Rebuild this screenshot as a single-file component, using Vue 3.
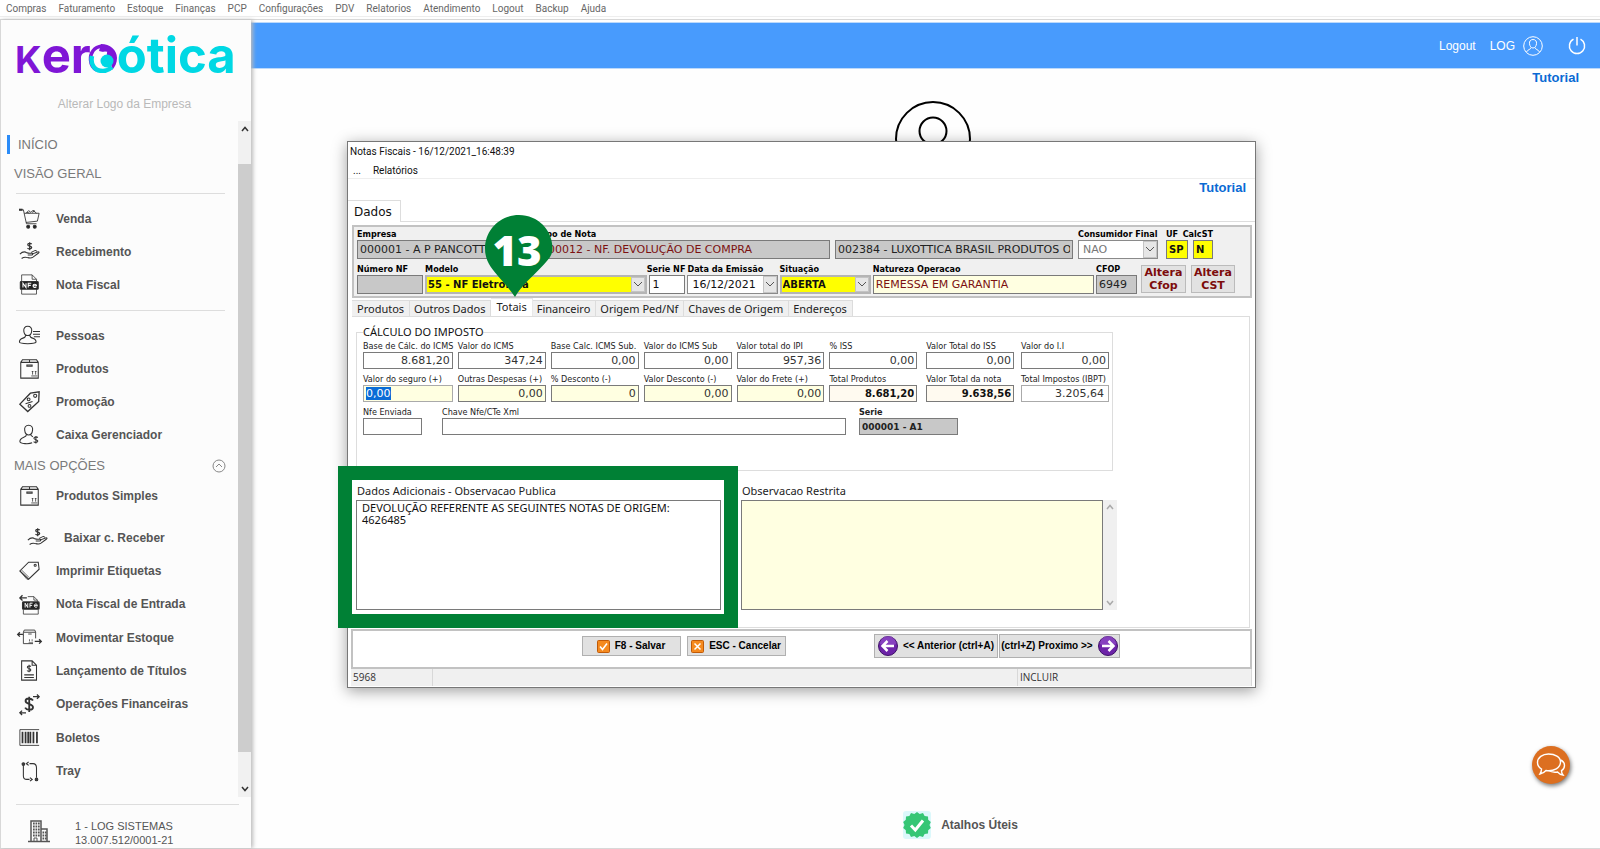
<script setup>
import { onMounted, ref } from 'vue'

const menus = ['Compras', 'Faturamento', 'Estoque', 'Finanças', 'PCP', 'Configurações', 'PDV', 'Relatorios', 'Atendimento', 'Logout', 'Backup', 'Ajuda']

const box = '<path d="M2 5h20v18H2zM2 5l2-3h16l2 3M12 2v3M9 8h6v1.500H9z"/><path d="M15.500 15v4M19 15v4M14 20.500h7M14.500 16l1-1 1 1M18 16l1-1 1 1" stroke-width=".9"/>'
const hand = '<path d="M1 15c3-3 6-3 8-1.500 2 1 4 .5 6 .5 1.500 0 1 2-.5 2H10M15 15l6-2.500c2-.6 2.500.5 1 1.500l-6 4.500c-1.500 1-4 1-6 .5-3-1-5-.5-7 1M14 13l4-2c1.500-.5 2 .2 1.500.8"/><path d="M14.500 3.500c-1-1.200-4.500-1-4.500.8 0 2 4.500 1.200 4.500 3.200 0 1.800-3.500 2-4.800.7M12.200 1.500v9" stroke-width="1.400"/>'
const icons = {
  cart: '<path d="M1 2h4l3.500 16h11.500M6 6h17l-2 9-13 1.500" stroke-width="1"/><path d="M8 6l3-3 2.500 2L16 2.500 20 6M9 5l3 1M15 5l3-2" stroke-width="1"/><circle cx="10.500" cy="21.500" r="1.700" fill="#222"/><circle cx="18" cy="21.500" r="1.700" fill="#222"/><path d="M0 2h4" stroke-width="2.400"/>',
  hand,
  nfe: '<path d="M3 9V1h12l5 5v3M15 1v5h5M3 17v6h17v-6" stroke-width=".9"/><rect x="1.500" y="8.500" width="20.500" height="9" rx="1" fill="#222"/><path d="M4.500 15.500v-5l3.500 5v-5M10.500 15.500v-5h3.500M10.500 13h3M16 13.500h4c0-2.500-4-2.500-4 0 0 2.300 3 2.300 3.800 1.300" stroke="#fff" stroke-width="1.200"/>',
  person: '<path d="M10 1.500c-3 0-5 2-4.500 5.500.3 3 2 5 4.500 5s4.200-2 4.500-5c.5-3.500-1.500-5.500-4.500-5.500zM7.500 12c0 2-1 2.500-3 3-2.500.8-4 2.200-4 4.500 0 2.500 19 2.500 19 0 0-2.300-1.500-3.700-4-4.500-2-.5-3-1-3-3"/><path d="M16 7.500h8M16 10.500h8M17 13.500h7"/>',
  box,
  tag: '<path d="M13 2.500 23 1l-.500 11L10 23.500 1 15z" stroke-width="1.500"/><circle cx="18.500" cy="5.500" r="1.800"/><circle cx="11" cy="9.500" r="1.600"/><circle cx="12" cy="17" r="1.600"/><path d="M7.500 14.500l8-2.500"/>',
  cashier: '<path d="M11 1.500c-3.500 0-5 2.500-4.500 5.500.3 3 2 5.500 4.500 5.500S15.200 10 15.500 7c.5-3-1-5.500-4.500-5.500zM8.500 12c0 2-1 2.500-3 3.200C3 16.200 1 17.500 1 20c0 3 11 3 14 1.500M13.500 12c0 1.500 1 2 2.500 2.500"/><path d="M21.500 15.500c-1-1.300-4.500-1-4.500.8 0 2 4.500 1.200 4.500 3.200 0 1.900-3.600 2-4.800.7M19.300 13.800v8.600" stroke-width="1.200"/>',
  label: '<path d="M11 2.500h11l1 8L11 22 1 12.500z"/><path d="M1 12.500l8 9.500h2M3 11.500l8.500 8.500" stroke-width=".8"/><circle cx="18.500" cy="6" r="1.200"/>',
  nfein: '<path d="M10 3h7l4 4v2M17 3v4h4M5 18v5h17v-5" stroke-width=".9"/><rect x="4" y="9" width="19" height="8.500" rx="1" fill="#222"/><path d="M7 15.500v-5l3 5v-5M12.500 15.500v-5h3M12.500 13h2.500M17.500 13.300h3.500c0-2.500-3.500-2.500-3.500 0 0 2.200 2.600 2.200 3.400 1.200" stroke="#fff" stroke-width="1.100"/><path d="M1 4.500h8M4 1.500l-3 3 3 3" stroke-width="1.500"/>',
  move: '<path d="M5 9.500V6h14v7M5 9v10h11M5 6l1-2.500h12L19 6M10.500 8h4" stroke-width="1"/><path d="M12 14v2.500M15 14v2.500M11 18h5" stroke-width=".8"/><path d="M4.500 8.500H-1M1 6l-2.500 2.500L1 11M18 16.500h7M23 14l2.500 2.500L23 19" stroke-width="1.500"/>',
  doc: '<path d="M3 1h12l5 5v17H3zM15 1v5h5M6 17h11M6 20h11"/><path d="M13.500 7.500c-1-1.300-4-1-4 .8s4 1.200 4 3-3.300 2-4.300.7M11.500 5.500v8.500" stroke-width="1.200"/>',
  money: '<path d="M16 7.500C14 4 7.500 4.500 7.500 8c0 4 8.500 3 8.500 7 0 3.500-7 4.200-9 .5M11.700 3v17.500" stroke-width="2.100"/><path d="M16 3h7M20.500.5 23 3l-2.500 2.500M8 21.500H1M3.500 19 1 21.500 3.500 24" stroke-width="1.500"/>',
  barcode: '<path d="M1 3h22M1 21h22M1 3v18" stroke-width="1"/><path d="M4 5.500v13M7.500 5.500v13M10.500 5.500v13M13 5.500v13M16.500 5.500v13M20.500 5.500v13" stroke-width="2"/>',
  tray: '<path d="M5 5v12c0 3 2 4 4 4h3M20 19V8c0-3-1-5-4-5h-4"/><circle cx="5" cy="3.500" r="1.500" fill="#444"/><circle cx="20" cy="21" r="1.500" fill="#444"/><path d="M11 1 8.500 3 11 5M12.500 19l2.500 2-2.500 2" stroke-width="1.400"/>',
}
const groupA = [['cart', 'Venda'], ['hand', 'Recebimento'], ['nfe', 'Nota Fiscal']]
const groupB = [['person', 'Pessoas'], ['box', 'Produtos'], ['tag', 'Promoção'], ['cashier', 'Caixa Gerenciador']]
const groupC = [['label', 'Imprimir Etiquetas'], ['nfein', 'Nota Fiscal de Entrada'], ['move', 'Movimentar Estoque'], ['doc', 'Lançamento de Títulos'], ['money', 'Operações Financeiras'], ['barcode', 'Boletos'], ['tray', 'Tray']]

const tabs = ['Produtos', 'Outros Dados', 'Totais', 'Financeiro', 'Origem Ped/Nf', 'Chaves de Origem', 'Endereços']
const activeTab = ref('Totais')

const taxes = [
  ['Base de Cálc. do ICMS', '8.681,20', ''],
  ['Valor do ICMS', '347,24', ''],
  ['Base Calc. ICMS Sub.', '0,00', ''],
  ['Valor do ICMS Sub', '0,00', ''],
  ['Valor total do IPI', '957,36', ''],
  ['% ISS', '0,00', 'after-lg'],
  ['Valor Total do ISS', '0,00', 'after-sm'],
  ['Valor do I.I', '0,00', ''],
  ['Valor do seguro (+)', '0,00', 'cream editing'],
  ['Outras Despesas (+)', '0,00', 'cream'],
  ['% Desconto (-)', '0', 'cream'],
  ['Valor Desconto (-)', '0,00', 'cream'],
  ['Valor do Frete (+)', '0,00', 'cream'],
  ['Total Produtos', '8.681,20', 'ivory after-lg'],
  ['Valor Total da nota', '9.638,56', 'ivory after-sm'],
  ['Total Impostos (IBPT)', '3.205,64', 'soft'],
]
const publicNote = ref('DEVOLUÇÃO REFERENTE AS SEGUINTES NOTAS DE ORIGEM:\n4626485')

const taxGrid = ref(null)
onMounted(() => {
  const field = taxGrid.value.querySelector('.editing input')
  field.focus({ preventScroll: true })
  field.select()
})
</script>

<template>
  <div class="page">
    <nav class="menubar">
      <button v-for="m in menus" :key="m" type="button">{{ m }}</button>
    </nav>

    <div class="body">
      <aside class="sidebar">
        <div class="logo" aria-label="keroótica">
          <span class="k">K</span><span class="purple">er</span>
          <svg class="eye" viewBox="0 0 30 30">
            <path d="M14 3C6 4 2 10 2.500 17c.3 4 2 8 6 10" fill="none" stroke="#7f16d6" stroke-width="3.500" />
            <path d="M13 1c9 0 16 6 16 14 0 5-2 9-5 12-1-8-1-17-13-19z" fill="#7f16d6" />
            <path d="M4 13c-2 9 3 15 11 15 4 0 7-2 9-4" fill="none" stroke="#00d8e4" stroke-width="4.500" />
            <circle cx="19" cy="18" r="6.500" fill="#00d8e4" />
            <path d="M10 19c-1-6 3-10 9-9" fill="none" stroke="#fff" stroke-width="2.500" />
          </svg>
          <span class="cyan">ótica</span>
        </div>
        <a class="change-logo" href="#">Alterar Logo da Empresa</a>
        <div class="nav-wrap">
          <nav class="nav">
            <a class="home" href="#">INÍCIO</a>
            <h2>VISÃO GERAL</h2>
            <hr />
            <a v-for="[icon, name] in groupA" :key="name" class="item" href="#">
              <svg class="ico" viewBox="0 0 24 24" v-html="icons[icon]"></svg>{{ name }}
            </a>
            <hr class="second" />
            <a v-for="[icon, name] in groupB" :key="name" class="item" href="#">
              <svg class="ico" viewBox="0 0 24 24" v-html="icons[icon]"></svg>{{ name }}
            </a>
            <h2 class="more">MAIS OPÇÕES
              <svg width="14" height="14" viewBox="0 0 14 14" fill="none" stroke="#888"><circle cx="7" cy="7" r="6" /><path d="M4 8l3-3 3 3" /></svg>
            </h2>
            <a class="item" href="#"><svg class="ico" viewBox="0 0 24 24" v-html="icons.box"></svg>Produtos Simples</a>
            <a class="item nested" href="#"><svg class="ico" viewBox="0 0 24 24" v-html="icons.hand"></svg>Baixar c. Receber</a>
            <div class="long">
              <a v-for="[icon, name] in groupC" :key="name" class="item" href="#">
                <svg class="ico" viewBox="0 0 24 24" v-html="icons[icon]"></svg>{{ name }}
              </a>
            </div>
          </nav>
          <div class="scroll">
            <svg width="8" height="6" viewBox="0 0 8 6"><path d="M1 5l3-3.500L7 5" /></svg>
            <i></i>
            <svg width="8" height="6" viewBox="0 0 8 6"><path d="M1 1l3 3.500L7 1" /></svg>
          </div>
        </div>
        <footer class="company">
          <svg width="22" height="24" viewBox="0 0 22 24" fill="none" stroke="#555">
            <path d="M3 22V2h10v8h6v12M0 22.500h22M13 10v12" stroke-width="1.500" />
            <path d="M5 4.500h7M5 7.500h7M5 10.500h7M5 13.500h7M5 16.500h7M14.500 13.500h4M14.500 16.500h4M14.500 19.500h4" stroke-width="2.200" stroke-dasharray="1.700 .8" />
            <path d="M6 22v-3h3v3" />
          </svg>
          <div>1 - LOG SISTEMAS<br />13.007.512/0001-21</div>
        </footer>
      </aside>

      <main class="main">
        <header class="topbar">
          <a href="#">Logout</a>
          <a href="#" class="user">LOG
            <svg width="20" height="20" viewBox="0 0 20 20" fill="none" stroke="#fff"><circle cx="10" cy="10" r="9.300" /><path d="M10 3.500c-2.500 0-3.800 1.800-3.500 4.200.3 2.500 1.500 4.300 3.500 4.300s3.200-1.800 3.500-4.300c.3-2.400-1-4.200-3.500-4.200zM8 11.500c0 2-3.500 2-4.500 4.500M12 11.500c0 2 3.500 2 4.500 4.500" /></svg>
          </a>
          <button type="button" aria-label="Desligar">
            <svg width="18" height="18" viewBox="0 0 18 18" fill="none" stroke="#fff" stroke-width="1.500"><path d="M5.500 2.200a7.600 7.600 0 1 0 7 0M9 0v8.500" /></svg>
          </button>
        </header>
        <a class="tutorial" href="#">Tutorial</a>
        <svg class="avatar" width="78" height="78" viewBox="0 0 78 78" fill="none" stroke="#000" stroke-width="2"><circle cx="39" cy="39" r="37" /><circle cx="39" cy="31" r="13.500" /><path d="M14 66c2-14 12-20 25-20s23 6 25 20" /></svg>
        <a class="shortcuts" href="#">
          <svg width="28" height="28" viewBox="0 0 28 28">
            <rect width="28" height="28" rx="3" fill="#dcf8fb" />
            <path d="M14 1l2.700 2.100L20 2l1.600 2.900 3.400.5.200 3.400 2.600 2.200L26.500 14l1.300 3-2.600 2.200-.2 3.400-3.400.5L20 26l-3.300-1.100L14 27l-2.700-2.100L8 26l-1.600-2.900-3.400-.5-.2-3.400L.2 17l1.300-3-1.300-3 2.600-2.200.2-3.400 3.400-.5L8 2l3.300 1.100z" fill="#36c675" />
            <path d="M8 14.500l4.300 4.500L20 9.500" fill="none" stroke="#fff" stroke-width="3" />
          </svg>
          Atalhos Úteis
        </a>
        <button class="chat" type="button" aria-label="Chat">
          <svg width="30" height="26" viewBox="0 0 30 26" fill="none" stroke="#fff" stroke-width="1.400"><path d="M12.500 2C6.500 2 1.500 5.500 1.500 10.500c0 3 1.500 5 4 6.500 0 2-.5 3.500-1.500 5 3-.5 4.500-1.800 6-3.500 8 1 14.500-2.500 14.500-8.500C24.500 5 19 2 12.500 2z" /><path d="M24.500 8c2.500 1 4 3 4 5.500 0 2.300-1 4-3 5.200 0 1.800.5 3 1.500 4.300-2.500-.3-4.200-1.500-5.500-3-3.500.5-6.500 0-9-1.500" /></svg>
        </button>
      </main>
    </div>

    <section class="window" aria-label="Notas Fiscais">
      <div class="title">Notas Fiscais - 16/12/2021_16:48:39</div>
      <div class="winmenu"><button type="button">...</button><button type="button">Relatórios</button></div>
      <div class="tutrow"><a href="#">Tutorial</a></div>
      <div class="maintab"><button type="button">Dados</button></div>
      <div class="sheet">
        <form class="head" @submit.prevent>
          <div class="row one">
            <div class="f"><label for="emp">Empresa</label><input id="emp" class="gray" value="000001 - A P PANCOTTI" readonly /></div>
            <div class="f"><label for="tipo">Tipo de Nota</label><input id="tipo" class="gray maroon" value="000012 - NF. DEVOLUÇÃO DE COMPRA" readonly /></div>
            <div class="f noname"><input class="gray" aria-label="Fornecedor" value="002384 - LUXOTTICA BRASIL PRODUTOS OTICOS" readonly /></div>
            <div class="f cons"><label for="cf">Consumidor Final</label>
              <div class="combo muted"><select id="cf"><option>NAO</option></select><span><svg width="8" height="5" viewBox="0 0 8 5"><path d="M0 0l4 4 4-4" /></svg></span></div></div>
            <div class="f"><label for="uf">UF</label><input id="uf" class="yellow" value="SP" /></div>
            <div class="f end"><label for="cst">CalcST</label><input id="cst" class="yellow" value="N" /></div>
          </div>
          <div class="row two">
            <div class="f"><label for="num">Número NF</label><input id="num" class="gray" readonly /></div>
            <div class="f"><label for="mod">Modelo</label>
              <div class="combo hot"><select id="mod"><option>55 - NF Eletronica</option></select><span><svg width="8" height="5" viewBox="0 0 8 5"><path d="M0 0l4 4 4-4" /></svg></span></div></div>
            <div class="f end"><label for="ser">Serie NF</label><input id="ser" value="1" /></div>
            <div class="f"><label for="dat">Data da Emissão</label>
              <div class="combo"><input id="dat" value="16/12/2021" /><span><svg width="8" height="5" viewBox="0 0 8 5"><path d="M0 0l4 4 4-4" /></svg></span></div></div>
            <div class="f"><label for="sit">Situação</label>
              <div class="combo hot"><select id="sit"><option>ABERTA</option></select><span><svg width="8" height="5" viewBox="0 0 8 5"><path d="M0 0l4 4 4-4" /></svg></span></div></div>
            <div class="f"><label for="nat">Natureza Operacao</label><input id="nat" class="cream maroon" value="REMESSA EM GARANTIA" /></div>
            <div class="f"><label for="cfop">CFOP</label><input id="cfop" class="gray" value="6949" readonly /></div>
            <button class="alt" type="button">Altera Cfop</button>
            <button class="alt last" type="button">Altera CST</button>
          </div>
        </form>

        <div class="tabs" role="tablist">
          <button v-for="t in tabs" :key="t" type="button" role="tab" :class="{ active: t === activeTab }" :aria-selected="t === activeTab" @click="activeTab = t">{{ t }}</button>
        </div>

        <div class="panel">
          <fieldset>
            <legend>CÁLCULO DO IMPOSTO</legend>
            <div ref="taxGrid" class="taxes">
              <div v-for="([name, value, kind], i) in taxes" :key="name" class="t" :class="kind">
                <label :for="'tax' + i">{{ name }}</label>
                <input :id="'tax' + i" :value="value" />
              </div>
            </div>
            <div class="keys">
              <div class="t sent"><label for="nfe">Nfe Enviada</label><input id="nfe" /></div>
              <div class="t"><label for="chave">Chave Nfe/CTe Xml</label><input id="chave" /></div>
              <div class="t serie"><label for="serie">Serie</label><input id="serie" value="000001 - A1" readonly /></div>
            </div>
          </fieldset>
          <div class="notes">
            <div class="note framed">
              <label for="pub">Dados Adicionais - Observacao Publica</label>
              <textarea id="pub" v-model="publicNote"></textarea>
            </div>
            <div class="note">
              <label for="priv">Observacao Restrita</label>
              <div class="scrolled">
                <textarea id="priv" class="cream"></textarea>
                <div class="bar">
                  <svg width="8" height="6" viewBox="0 0 8 6"><path d="M1 5l3-3.500L7 5" /></svg>
                  <svg width="8" height="6" viewBox="0 0 8 6"><path d="M1 1l3 3.500L7 1" /></svg>
                </div>
              </div>
            </div>
          </div>
        </div>
      </div>

      <div class="actions">
        <button class="save" type="button"><svg width="13" height="13" viewBox="0 0 13 13"><rect x=".5" y=".5" width="12" height="12" rx="1" fill="#f58a1f" stroke="#c05a08" /><path d="M3 6.500L5.500 9.500 10 3.500" fill="none" stroke="#fff" stroke-width="1.600" /></svg>F8 - Salvar</button>
        <button class="cancel" type="button"><svg width="13" height="13" viewBox="0 0 13 13"><rect x=".5" y=".5" width="12" height="12" rx="1" fill="#f58a1f" stroke="#c05a08" /><path d="M3.500 3.500l6 6M9.500 3.500l-6 6" fill="none" stroke="#fff" stroke-width="1.500" /></svg>ESC - Cancelar</button>
        <button class="prev" type="button"><svg width="20" height="20" viewBox="0 0 20 20"><circle cx="10" cy="10" r="9.500" fill="#6d24a8" stroke="#3f1268" /><path d="M2 8a8 8 0 0 1 16 0c-4 2-12 2-16 0z" fill="#9a55cf" opacity=".6" /><path d="M16 10H5M9.500 5L4.500 10l5 5" fill="none" stroke="#fff" stroke-width="2.500" /></svg>&lt;&lt; Anterior (ctrl+A)</button>
        <button class="next" type="button">(ctrl+Z) Proximo &gt;&gt;<svg width="20" height="20" viewBox="0 0 20 20"><circle cx="10" cy="10" r="9.500" fill="#6d24a8" stroke="#3f1268" /><path d="M2 8a8 8 0 0 1 16 0c-4 2-12 2-16 0z" fill="#9a55cf" opacity=".6" /><path d="M4 10h11M10.500 5l5 5-5 5" fill="none" stroke="#fff" stroke-width="2.500" /></svg></button>
      </div>
      <div class="status"><span>5968</span><span></span><span>INCLUIR</span></div>

      <div class="pin">
        <svg width="68" height="83" viewBox="0 0 68 83"><path d="M34 0C15 0 0 15 0 33.500c0 7 2 12.500 5.500 18C11 60 22 70 30 82c6-11 18-21 26-29.500 7-7.500 11.500-11.500 11.500-19C67.500 15 53 0 34 0z" fill="#008035" /></svg>
        <b>13</b>
      </div>
    </section>
  </div>
</template>

<style>
html, body { background: #fefefe; }
body { margin: 0; }
</style>

<style scoped>
* { box-sizing: border-box; }
.page {
  position: relative;
  min-height: 100vh;
  display: flex;
  flex-direction: column;
  font-family: "Liberation Sans", sans-serif;
  background: #fefefe;
}
button { font: inherit; margin: 0; padding: 0; border: 0; background: none; color: inherit; cursor: pointer; }
a { text-decoration: none; color: inherit; }
.menubar {
  display: flex;
  gap: 12px;
  height: 17px;
  padding: 1px 0 0 6px;
  font: 10px/16px Roboto, "Open Sans", sans-serif;
  color: #666;
  background: #fff;
  border-bottom: 1px solid #eee;
}
.body { flex: 1; display: flex; margin-top: 2px; border-top: 1px solid #d8d8d8; border-bottom: 1px solid #d8d8d8; }

.sidebar {
  width: 251px;
  flex: none;
  display: flex;
  flex-direction: column;
  border-left: 1px solid #d8d8d8;
  background: #fcfcfc;
  box-shadow: 2px 0 4px #bbb;
  z-index: 1;
}
.logo {
  display: flex;
  align-items: baseline;
  height: 68px;
  padding: 3px 0 0 14px;
  font: 700 49px/66px Inter, sans-serif;
}
.logo .k { font-size: 37px; color: #7f16d6; }
.purple { color: #7f16d6; }
.cyan { color: #00d8e4; }
.eye { width: 30px; height: 30px; margin: 0 -1px -2px -3px; flex: none; }
.change-logo { padding-right: 3px; text-align: center; font-size: 12px; line-height: 33px; color: #b9b9b9; }
.nav-wrap { flex: none; display: flex; }
.nav { flex: 1; padding-bottom: 9px; }
.home { display: block; height: 19px; margin: 14px 0 0 6px; padding-left: 8px; border-left: 3px solid #2b8cf8; font-size: 13px; line-height: 19px; color: #777; }
h2 { display: flex; align-items: center; margin: 11px 12px 0 13px; font-size: 13px; line-height: 18px; font-weight: 400; color: #7a7a7a; }
h2 svg { margin-left: auto; }
hr { height: 1px; margin: 10px 13px 8px 15px; border: 0; background: #ddd; }
hr.second { margin: 9px 13px 8px 15px; }
.item { display: flex; align-items: center; height: 33px; padding-left: 18px; font-size: 12px; font-weight: 700; color: #555; }
.ico { width: 21px; height: 21px; margin-right: 16px; overflow: visible; fill: none; stroke: #333; stroke-width: 1.2; }
.more { margin-top: 6px; margin-bottom: 4px; }
.nested { padding-left: 26px; margin-top: 9px; }
.long { display: flex; flex-direction: column; height: 234px; }
.long .item { flex: 1; }
.scroll { width: 13px; display: flex; flex-direction: column; align-items: center; padding: 5px 0; background: #f1f1f1; }
.scroll i { flex: 1; width: 13px; margin: 32px 0 34px; background: #cdcdcd; }
.scroll path { fill: none; stroke: #333; stroke-width: 1.5; }
.company { display: flex; gap: 25px; margin: 7px 12px 0 15px; padding: 14px 0 0 12px; border-top: 1px solid #ddd; font-size: 11px; line-height: 14px; color: #555; }

.main { position: relative; flex: 1; display: flex; flex-direction: column; }
.topbar { display: flex; align-items: center; justify-content: flex-end; margin-top: 2px; height: 47px; padding-right: 14px; border: 1px solid #bcd9fb; border-width: 1px 0; background: #489bfd; color: #fff; font-size: 12px; }
.user { display: flex; align-items: center; gap: 8px; margin: 0 25px 0 14px; }
.topbar button { display: flex; }
.tutorial { align-self: flex-end; margin-right: 21px; font-size: 13px; line-height: 18px; font-weight: 700; color: #0a6ad4; }
.avatar { align-self: center; margin: 13px 0 0 14px; }
.shortcuts { align-self: center; display: flex; align-items: center; gap: 10px; margin: auto 0 9px 70px; font-size: 12px; font-weight: 700; color: #555; }
.chat { position: absolute; right: 30px; bottom: 64px; width: 38px; height: 38px; border-radius: 50%; display: grid; place-items: center; background: #dc6f20; box-shadow: 1px 2px 4px #777; }

.window {
  position: absolute;
  z-index: 2;
  top: 141px;
  left: 347px;
  right: 344px;
  border: 1px solid #777;
  background: #fff;
  box-shadow: 0 3px 14px rgba(0, 0, 0, .38);
  color: #111;
  font: 11px/14px "DejaVu Sans", sans-serif;
}
.title { padding: 0 2px; font: 10px/20px Roboto, "Open Sans", sans-serif; }
.winmenu { display: flex; gap: 12px; height: 17px; padding-left: 5px; border-bottom: 1px solid #eee; font: 10px/17px Roboto, "Open Sans", sans-serif; }
.tutrow { height: 21px; padding-right: 9px; text-align: right; font: 700 13px/18px "Liberation Sans", sans-serif; color: #0a6ad4; }
.maintab { height: 22px; border-bottom: 1px solid #ddd; }
.maintab button { height: 22px; padding: 0 8px 0 6px; border: 1px solid #ddd; border-width: 1px 1px 0 0; background: #fff; font-size: 12px; }
.sheet { margin: 0 3px 0 4px; padding-top: 3px; }
.head { padding: 0 5px 2px 3px; border: 2px solid #c2c2c2; background: #f0f0f0; }
.row { display: grid; }
.one { grid-template-columns: 176fr 292fr 238fr 83px 22px 20px; column-gap: 5px; padding-right: 32px; }
.two { grid-template-columns: 66fr 222fr 36fr 90fr 91fr 221fr 41fr 47px 47px; column-gap: 2px; margin-top: 2px; padding-right: 10px; }
.f { min-width: 0; display: flex; flex-direction: column; }
.f label { display: block; height: 13px; font: 700 9px/14px "DejaVu Sans Condensed", "Open Sans", sans-serif; white-space: nowrap; color: #000; }
.two label { height: 14px; line-height: 16px; }
.noname { padding-top: 13px; }
.cons { padding-right: 3px; }
.end label { align-self: flex-end; }
input, select, textarea { display: block; width: 100%; min-width: 0; margin: 0; border: 1px solid #7a7a7a; border-radius: 0; background: #fff; color: #111; font: 11px/14px "DejaVu Sans", sans-serif; outline: 0; }
.f input { height: 19px; padding: 0 2px; }
.f .gray { background: #c8c8c8; color: #222; }
.f .cream { background: #ffffe1; }
.f .maroon { color: #7c1111; }
.f .yellow { background: #ff0; font-weight: 700; font-size: 10px; }
.combo { display: flex; height: 19px; border: 1px solid #8a8a8a; background: #fff; }
.combo select, .combo input { flex: 1; height: 17px; border: 0; padding: 0 4px; appearance: none; background: transparent; }
.combo span { width: 14px; flex: none; display: grid; place-items: center; border: 1px solid #c4c4c4; background: #e6e6e6; }
.combo path { fill: none; stroke: #555; }
.muted select { color: #777; }
.hot { border: 2px solid #b5b5b5; }
.hot select { height: 15px; padding: 0 1px; background: #ff0; font-weight: 700; font-size: 10px; }
.alt { height: 28px; margin: 4px 0 0 2px; padding: 0 2px; border: 1px solid #bbb; background: #e2e2e2; font: 700 11px/13px "DejaVu Sans", sans-serif; color: #7c0b0b; }
.alt.last { margin-left: 3px; }

.tabs { display: flex; align-items: flex-end; height: 18px; }
.tabs button { height: 16px; padding: 0 5px 0 4px; border: 1px solid #dcdcdc; border-width: 1px 1px 0 0; background: #f0f0f0; font: 11px/15px "Noto Sans", sans-serif; color: #222; white-space: nowrap; }
.tabs button:first-child { padding-left: 5px; }
.tabs button.active { height: 18px; padding: 0 5px 3px; background: #fff; border-color: #e8e8e8; }
.panel { margin-right: 2px; padding: 8px 0 17px 4px; border: 1px solid #ddd; border-width: 1px 1px 1px 0; }
fieldset { margin: 0 136px 0 0; padding: 0 3px 35px 6px; border: 1px solid #ddd; min-width: 0; }
legend { padding: 0; font: 11px/14px "Noto Sans", sans-serif; }
.taxes { display: grid; grid-template-columns: 90fr 88fr 88fr 88fr 88fr 92fr 90fr 88fr; gap: 3px 5px; }
.t { min-width: 0; }
.t label { display: block; height: 13px; font: 9px/14px "DejaVu Sans Condensed", "Open Sans", sans-serif; white-space: nowrap; color: #222; }
.t input { height: 17px; padding: 0 2px; text-align: right; color: #333; }
.after-lg { padding-right: 4px; }
.after-sm { padding-right: 2px; }
.cream input, textarea.cream { background: #ffffe1; }
.ivory input { background: #fffaf0; color: #111; font-weight: 700; font-size: 10px; }
.soft input { border-color: #aaa; padding-right: 4px; }
.editing input { border-color: #aaa; text-align: left; }
.editing input::selection { background: #0a6cd6; color: #fff; }
.keys { display: grid; grid-template-columns: 66fr 404fr 99fr; margin: 3px 151px 0 0; column-gap: 13px; }
.keys input { text-align: left; }
.sent { padding-right: 7px; }
.serie label { font-weight: 700; }
.serie input { background: #c8c8c8; color: #222; font-weight: 700; font-size: 9px; }
.notes { display: grid; grid-template-columns: 365fr 376fr; column-gap: 20px; margin: 11px 132px 0 0; }
.note label { display: block; padding-left: 1px; font: 11px/18px "Noto Sans", sans-serif; color: #222; }
.framed { position: relative; }
.framed::after { content: ""; position: absolute; inset: -16px -17px -18px -18px; border: 14px solid #008035; pointer-events: none; }
textarea { height: 110px; padding: 1px 5px; resize: none; font: 11px/12px "Noto Sans", sans-serif; }
.scrolled { display: flex; }
.scrolled textarea { flex: 1; }
.bar { width: 14px; display: flex; flex-direction: column; justify-content: space-between; align-items: center; padding: 4px 0; background: #f0f0f0; }
.bar path { fill: none; stroke: #aaa; stroke-width: 1.5; }

.actions { display: grid; grid-template-columns: 225fr 99px 99px 93fr 124px 122px 128fr; align-items: center; height: 40px; margin: 1px 3px 0; border: 2px solid #c2c2c2; font: 700 10px/14px "Liberation Sans", sans-serif; }
.actions button { display: flex; align-items: center; justify-content: center; gap: 5px; height: 20px; border: 1px solid #b0b0b0; background: #e1e1e1; white-space: nowrap; color: #000; margin-bottom: 6px; }
.actions .save { grid-column: 2; }
.actions .cancel { grid-column: 3; margin: 0 -6px 6px 6px; }
.actions .prev { grid-column: 5; height: 24px; }
.actions .next { grid-column: 6; height: 24px; margin-left: 1px; }
.status { display: grid; grid-template-columns: 82px 1fr 234px; height: 17px; margin: 0 3px 1px; background: #f0f0f0; font: 10px/17px "Open Sans", sans-serif; color: #333; }
.status span { padding-left: 2px; border-right: 1px solid #d8d8d8; }
.pin { position: absolute; top: 73px; left: 137px; width: 68px; height: 83px; color: #fff; }
.pin svg { position: absolute; }
.pin b { position: absolute; inset: 0 4px auto 0; text-align: center; font: 800 42px/70px "Open Sans", sans-serif; }
</style>
